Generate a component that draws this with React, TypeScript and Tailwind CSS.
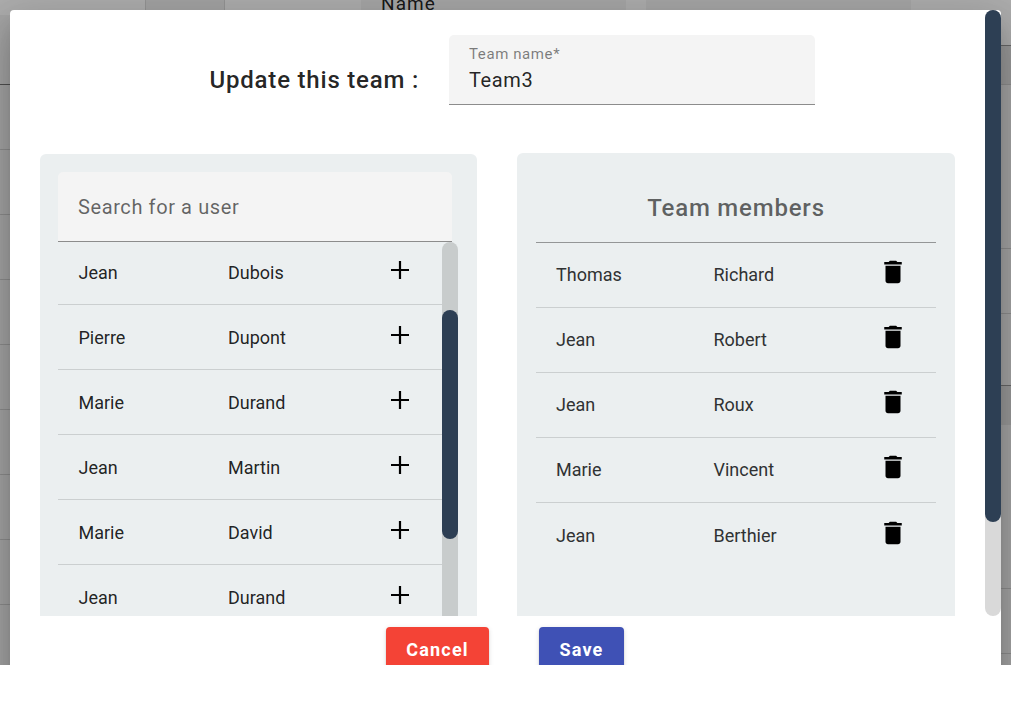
import React from 'react';

type Person = { first: string; last: string };

const users: Person[] = [
  { first: 'Jean', last: 'Dubois' },
  { first: 'Pierre', last: 'Dupont' },
  { first: 'Marie', last: 'Durand' },
  { first: 'Jean', last: 'Martin' },
  { first: 'Marie', last: 'David' },
  { first: 'Jean', last: 'Durand' },
];

const members: Person[] = [
  { first: 'Thomas', last: 'Richard' },
  { first: 'Jean', last: 'Robert' },
  { first: 'Jean', last: 'Roux' },
  { first: 'Marie', last: 'Vincent' },
  { first: 'Jean', last: 'Berthier' },
];

function AddIcon() {
  return (
    <svg viewBox="0 0 30 30" className="block size-[30px]" fill="#000">
      <path d="M24 16h-7.900V24h-2.200V16H6v-2h7.900V6h2.200v8H24z" />
    </svg>
  );
}

function DeleteIcon() {
  return (
    <svg viewBox="0 0 24 24" className="block size-[30px]" fill="#000">
      <path d="M6 19c0 1.100.9 2 2 2h8c1.100 0 2-.9 2-2V7H6v12zM19 4h-3.500l-1-1h-5l-1 1H5v2h14V4z" />
    </svg>
  );
}

function Backdrop() {
  return (
    <div className="flex h-full flex-col bg-[#f4f4f4]">
      <div className="flex h-[15px] shrink-0 bg-[#ffffff]">
        <div className="w-[145px]" />
        <div className="w-20 border-x border-[#dadada] bg-[#f0f0f0]" />
        <div className="w-[136px]" />
        <div className="w-[265px] bg-[#f5f5f5] pl-5">
          <span className="relative -top-[9px] text-[19px] leading-[26px] tracking-[1.100px] text-black/87">Name</span>
        </div>
        <div className="w-5" />
        <div className="w-[265px] bg-[#f5f5f5]" />
      </div>
      <div className="flex min-h-0 grow justify-between">
        <div className="w-10">
          <div className="h-[70px] border-b border-[#777]" />
          {Array.from({ length: 8 }, (_, i) => (
            <div key={i} className="h-[65px] border-b border-[#d0d0d0]" />
          ))}
        </div>
        <div className="w-10">
          <div className="h-[31px] border-b border-[#999] bg-white" />
          <div className="h-[39px] border-b border-[#d0d0d0] bg-[#e4e4e4]" />
          <div className="h-[164px] border-b border-[#d0d0d0]" />
          <div className="h-[65px] border-b border-[#d0d0d0]" />
          <div className="h-[72px] border-b border-[#999]" />
          <div className="h-[39px] bg-[#e4e4e4]" />
          <div className="h-[164px] border-b border-[#d0d0d0]" />
          <div className="h-[65px] border-b border-[#d0d0d0]" />
        </div>
      </div>
    </div>
  );
}

export default function App() {
  return (
    <div className="h-[710px] w-[1011px] overflow-hidden bg-white font-['Roboto',sans-serif] text-black/87">
      <div className="relative h-[665px] overflow-hidden">
        <Backdrop />
        <div className="absolute inset-0 bg-black/32 px-[10px] pt-[10px]">
          <div className="flex h-[700px] flex-col rounded-t-[4px] bg-white shadow-[0_11px_15px_-7px_rgba(0,0,0,0.2),0_24px_38px_3px_rgba(0,0,0,0.14),0_9px_46px_8px_rgba(0,0,0,0.12)]">
            <div className="flex h-[606px] shrink-0 overflow-hidden">
              <div className="flex w-[975px] flex-col pl-[30px]">
                <div className="flex h-[143px] shrink-0 pt-[25px] pl-[169px]">
                  <h1 className="w-[240px] pt-[29px] pl-[0.500px] text-[24px] leading-8 font-medium tracking-[0.800px] whitespace-nowrap">Update this team :</h1>
                  <div className="flex h-[70px] w-[366px] flex-col rounded-t-[5px] border-b border-[#8c8c8c] bg-[#f4f4f4] pt-[10px] pl-5">
                    <label className="text-[15px] leading-[18px] tracking-[0.600px] text-black/50">Team name*</label>
                    <span className="mt-[3px] text-[20px] leading-7 tracking-[0.600px]">Team3</span>
                  </div>
                </div>
                <div className="flex grow gap-10">
                  <section className="mt-px w-[437px] rounded-t-[6px] bg-[#ebeff0] px-[18px] pt-[18px]">
                    <div className="flex h-[70px] w-[394px] items-center rounded-t-[5px] border-b border-[#8c8c8c] bg-[#f4f4f4] pl-5 text-[20px] tracking-[0.600px] text-black/60">
                      Search for a user
                    </div>
                    <div className="flex h-[374px] w-[400px] overflow-hidden">
                      <div className="w-96">
                        {users.map((u, i) => (
                          <div key={i} className={`flex border-b border-[#cbcfd0] ${i === 0 ? 'h-[63px] pt-[18px]' : 'h-[65px] pt-5'}`}>
                            <span className="w-[170px] pl-[20.500px] text-[18px] leading-[26px]">{u.first}</span>
                            <span className="w-[157px] text-[18px] leading-[26px]">{u.last}</span>
                            <span className="-mt-[5px]"><AddIcon /></span>
                          </div>
                        ))}
                      </div>
                      <div className="h-[420px] w-4 rounded-full bg-[#c8cccc] pt-[68px]">
                        <div className="h-[229px] rounded-full bg-[#2d3f54]" />
                      </div>
                    </div>
                  </section>
                  <section className="w-[438px] rounded-t-[6px] bg-[#ebeff0] px-[19px]">
                    <h2 className="h-[90px] border-b border-[#949697] pt-[39px] text-center text-[24px] leading-8 font-medium tracking-[0.800px] text-black/60">Team members</h2>
                    {members.map((m, i) => (
                      <div key={i} className={`flex h-[65px] border-[#cbcfd0] ${i < 4 ? 'border-b pt-[19px]' : 'pt-5'}`}>
                        <span className="w-[177.500px] pl-5 text-[18px] leading-[26px] text-[#303233]">{m.first}</span>
                        <span className="w-[164.700px] text-[18px] leading-[26px] text-[#303233]">{m.last}</span>
                        <span className="-mt-[5px]"><DeleteIcon /></span>
                      </div>
                    ))}
                  </section>
                </div>
              </div>
              <div className="ml-auto w-4 rounded-full bg-[#d9d9d9]">
                <div className="h-[512px] rounded-full bg-[#2d3f54]" />
              </div>
            </div>
            <div className="flex gap-[50px] pt-[11px] pl-[376px] text-[18px] font-bold tracking-[1.200px] text-white">
              <button className="h-[45px] w-[103px] rounded-[4px] bg-[#f44336] shadow-[0_3px_1px_-2px_rgba(0,0,0,0.2),0_2px_2px_rgba(0,0,0,0.14),0_1px_5px_rgba(0,0,0,0.12)]">Cancel</button>
              <button className="h-[45px] w-[85px] rounded-[4px] bg-[#3f51b5] shadow-[0_3px_1px_-2px_rgba(0,0,0,0.2),0_2px_2px_rgba(0,0,0,0.14),0_1px_5px_rgba(0,0,0,0.12)]">Save</button>
            </div>
          </div>
        </div>
      </div>
    </div>
  );
}
